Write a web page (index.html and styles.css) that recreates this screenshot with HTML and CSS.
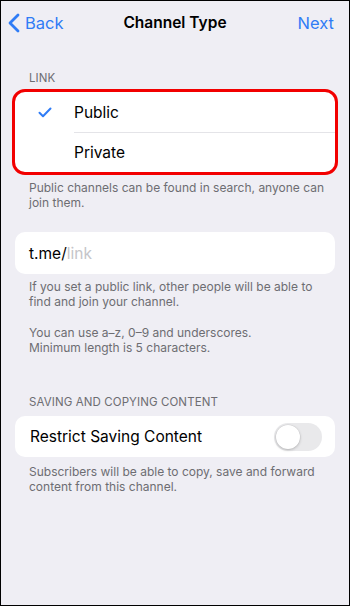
FILE: index.html
```html
<!DOCTYPE html>
<html lang="en">
<head>
    <meta charset="UTF-8">
    <meta name="viewport" content="width=device-width, initial-scale=1.0">
    <title>Channel Type</title>
    <link rel="stylesheet" href="styles.css">
</head>
<body>
    <div class="screen">
        <!-- Navigation bar -->
        <div class="nav">
            <a class="nav-back">
                <svg class="chevron" width="12" height="20" viewBox="0 0 12 20">
                    <path d="M10 2 L2 10 L10 18" fill="none" stroke="#2f7cf6" stroke-width="2.8" stroke-linecap="round" stroke-linejoin="round"/>
                </svg>
                Back
            </a>
            <div class="nav-title">Channel Type</div>
            <a class="nav-next">Next</a>
        </div>

        <!-- Link type -->
        <div class="section-label">LINK</div>
        <div class="card card-highlight">
            <div class="row">
                <span class="check">
                    <svg width="14" height="11" viewBox="0 0 14 11">
                        <path d="M1.5 5.8 L5 9.2 L12.5 1.5" fill="none" stroke="#2f7cf6" stroke-width="2" stroke-linecap="round" stroke-linejoin="round"/>
                    </svg>
                </span>
                <span class="row-text">Public</span>
            </div>
            <div class="row">
                <span class="check"></span>
                <span class="row-text">Private</span>
            </div>
        </div>
        <div class="note">Public channels can be found in search, anyone can join them.</div>

        <!-- Public link -->
        <div class="card input-card">
            <span class="prefix">t.me/</span><span class="placeholder">link</span>
        </div>
        <div class="note">
            <p>If you set a public link, other people will be able to find and join your channel.</p>
            <p>You can use a–z, 0–9 and underscores.<br>Minimum length is 5 characters.</p>
        </div>

        <!-- Saving content -->
        <div class="section-label section-label-spaced">SAVING AND COPYING CONTENT</div>
        <div class="card toggle-card">
            <span class="toggle-text">Restrict Saving Content</span>
            <span class="switch"><span class="knob"></span></span>
        </div>
        <div class="note">Subscribers will be able to copy, save and forward content from this channel.</div>
    </div>
</body>
</html>
```

FILE: styles.css
```css
body {
    margin: 0;
    font-family: Inter, "Liberation Sans", sans-serif;
    color: #000;
}

.screen {
    width: 350px;
    height: 606px;
    box-sizing: border-box;
    border: 1px solid #000;
    background: #efeef4;
    overflow: hidden;
}

.nav {
    position: relative;
    height: 43px;
    display: flex;
    align-items: center;
    justify-content: space-between;
    padding: 0 15px 0 7px;
}

.nav-back,
.nav-next {
    color: #2f7cf6;
    font-size: 16.5px;
    display: flex;
    align-items: center;
    gap: 5px;
}

.chevron {
    display: block;
}

.nav-title {
    position: absolute;
    left: 0;
    right: 0;
    text-align: center;
    font-size: 15.5px;
    font-weight: 600;
    pointer-events: none;
}

.section-label {
    margin: 27px 0 0 28px;
    font-size: 11.5px;
    color: #6d6d72;
    line-height: 14px;
    letter-spacing: 0.1px;
}

.section-label-spaced {
    margin-top: 40px;
}

.card {
    margin: 0 14px;
    background: #fff;
    border-radius: 10px;
}

.card-highlight {
    margin: 4px 11px 0;
    border: 3px solid #f20000;
    border-radius: 13px;
}

.row {
    display: flex;
    align-items: center;
    height: 40px;
}

.check {
    width: 59px;
    flex-shrink: 0;
    display: flex;
    justify-content: center;
}

.row-text {
    flex: 1;
    height: 100%;
    display: flex;
    align-items: center;
    font-size: 15.5px;
}

.row + .row .row-text {
    border-top: 1px solid #e4e4e8;
    height: calc(100% - 1px);
}

.note {
    margin: 5px 0 0 28px;
    padding-right: 22px;
    font-size: 12px;
    line-height: 15px;
    color: #6d6d72;
}

.note p {
    margin: 0 0 16px;
}

.note p:last-child {
    margin-bottom: 0;
}

.input-card {
    margin-top: 22px;
    height: 42px;
    display: flex;
    align-items: center;
    padding-left: 14px;
    font-size: 15.5px;
}

.input-card + .note {
    margin-top: 5px;
}

.placeholder {
    color: #c5c5c9;
}

.toggle-card {
    margin-top: 7px;
    height: 41px;
    display: flex;
    align-items: center;
    justify-content: space-between;
    padding: 0 13px 0 15px;
}

.toggle-card + .note {
    margin-top: 7px;
}

.toggle-text {
    font-size: 15.5px;
}

.switch {
    position: relative;
    width: 48px;
    height: 28px;
    border-radius: 14px;
    background: #e9e9eb;
}

.knob {
    position: absolute;
    left: 2px;
    top: 2px;
    width: 24px;
    height: 24px;
    border-radius: 50%;
    background: #fff;
    box-shadow: 0 1px 3px rgba(0, 0, 0, 0.22), 0 0 0 0.5px rgba(0, 0, 0, 0.06);
}
```
